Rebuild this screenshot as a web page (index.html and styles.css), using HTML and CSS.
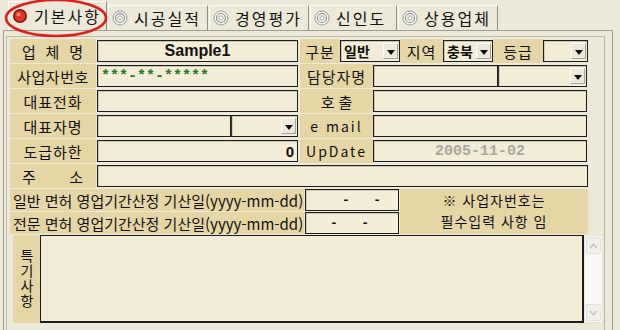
FILE: index.html
```html
<!DOCTYPE html>
<html lang="ko">
<head>
    <meta charset="UTF-8">
    <title>기본사항</title>
    <link rel="stylesheet" href="styles.css">
</head>
<body>
    <div class="window">
        <div class="tabs">
            <div class="tab active">
                <svg class="radio" viewBox="0 0 16 16" width="16" height="16">
                    <circle cx="8" cy="8" r="7" fill="#6e1a10"/>
                    <circle cx="8" cy="8" r="5.5" fill="#e0321e"/>
                    <circle cx="6.5" cy="6.5" r="2" fill="#ff8a70"/>
                </svg>
                기본사항
            </div>
            <div class="tab">
                <svg class="radio" viewBox="0 0 16 16" width="16" height="16">
                    <circle cx="8" cy="8" r="7" fill="#f4f4f0" stroke="#9a9a94" stroke-width="1"/>
                    <circle cx="8" cy="8" r="4.5" fill="none" stroke="#8f8f8a" stroke-width="1.2"/>
                    <circle cx="8" cy="8" r="2.2" fill="none" stroke="#b4b4ae" stroke-width="1"/>
                </svg>
                시공실적
            </div>
            <div class="tab">
                <svg class="radio" viewBox="0 0 16 16" width="16" height="16">
                    <circle cx="8" cy="8" r="7" fill="#f4f4f0" stroke="#9a9a94" stroke-width="1"/>
                    <circle cx="8" cy="8" r="4.5" fill="none" stroke="#8f8f8a" stroke-width="1.2"/>
                    <circle cx="8" cy="8" r="2.2" fill="none" stroke="#b4b4ae" stroke-width="1"/>
                </svg>
                경영평가
            </div>
            <div class="tab short">
                <svg class="radio" viewBox="0 0 16 16" width="16" height="16">
                    <circle cx="8" cy="8" r="7" fill="#f4f4f0" stroke="#9a9a94" stroke-width="1"/>
                    <circle cx="8" cy="8" r="4.5" fill="none" stroke="#8f8f8a" stroke-width="1.2"/>
                    <circle cx="8" cy="8" r="2.2" fill="none" stroke="#b4b4ae" stroke-width="1"/>
                </svg>
                신인도
            </div>
            <div class="tab">
                <svg class="radio" viewBox="0 0 16 16" width="16" height="16">
                    <circle cx="8" cy="8" r="7" fill="#f4f4f0" stroke="#9a9a94" stroke-width="1"/>
                    <circle cx="8" cy="8" r="4.5" fill="none" stroke="#8f8f8a" stroke-width="1.2"/>
                    <circle cx="8" cy="8" r="2.2" fill="none" stroke="#b4b4ae" stroke-width="1"/>
                </svg>
                상용업체
            </div>
        </div>

        <!-- red annotation ring around the active tab -->
        <svg class="mark" width="120" height="42" viewBox="0 0 120 42">
            <ellipse cx="56" cy="18" rx="50" ry="18" fill="none" stroke="#e31b1b" stroke-width="2.5"/>
        </svg>

        <div class="panel">
            <div class="frame">
                <div class="row">
                    <div class="label spread w86"><span>업</span><span>체</span><span>명</span></div>
                    <div class="field w201 sample">Sample1</div>
                    <div class="label w40 ml2">구분</div>
                    <div class="select w60"><span class="val">일반</span><span class="drop"></span></div>
                    <div class="label w43">지역</div>
                    <div class="select w50"><span class="val">충북</span><span class="drop"></span></div>
                    <div class="label w50">등급</div>
                    <div class="select w45"><span class="val"></span><span class="drop"></span></div>
                </div>
                <div class="row">
                    <div class="label w86 tight">사업자번호</div>
                    <div class="field w201 bizno">***-**-*****</div>
                    <div class="label w73 ml2">담당자명</div>
                    <div class="field w125"></div>
                    <div class="select w89 flat"><span class="val"></span><span class="drop"></span></div>
                </div>
                <div class="row">
                    <div class="label w86">대표전화</div>
                    <div class="field w201"></div>
                    <div class="label w73 ml2 wide">호출</div>
                    <div class="field w214"></div>
                </div>
                <div class="row">
                    <div class="label w86">대표자명</div>
                    <div class="field w134"></div>
                    <div class="select w67 flat"><span class="val"></span><span class="drop"></span></div>
                    <div class="label w73 ml2 latin">e mail</div>
                    <div class="field w214"></div>
                </div>
                <div class="row">
                    <div class="label w86">도급하한</div>
                    <div class="field w201 amount">0</div>
                    <div class="label w73 ml2 latin">UpDate</div>
                    <div class="field w214 date">2005-11-02</div>
                </div>
                <div class="row">
                    <div class="label spread w86"><span>주</span><span>소</span></div>
                    <div class="field w491"></div>
                </div>
                <div class="split">
                    <div class="split-left">
                        <div class="row short-row">
                            <div class="label w294 left">일반 면허 영업기간산정 기산일(yyyy-mm-dd)</div>
                            <div class="field w94 mask m1">-&nbsp;&nbsp;&nbsp;-</div>
                        </div>
                        <div class="row short-row">
                            <div class="label w294 left">전문 면허 영업기간산정 기산일(yyyy-mm-dd)</div>
                            <div class="field w94 mask m2">-&nbsp;&nbsp;&nbsp;-</div>
                        </div>
                    </div>
                    <div class="note">※ 사업자번호는<br>필수입력 사항 임</div>
                </div>
                <div class="memo-row">
                    <div class="vlabel"><span>특기사항</span></div>
                    <div class="memo"></div>
                    <div class="scroll">
                        <div class="sbtn">
                            <svg width="9" height="6" viewBox="0 0 9 6"><path d="M1 5 L4.5 1.5 L8 5" fill="none" stroke="#c4c4c0" stroke-width="1.6"/></svg>
                        </div>
                        <div class="sbtn">
                            <svg width="9" height="6" viewBox="0 0 9 6"><path d="M1 1 L4.5 4.5 L8 1" fill="none" stroke="#c4c4c0" stroke-width="1.6"/></svg>
                        </div>
                    </div>
                </div>
            </div>
        </div>
    </div>
</body>
</html>
```

FILE: styles.css
```css
* {
    margin: 0;
    padding: 0;
    box-sizing: border-box;
}

body {
    font-family: "Noto Sans CJK KR", "Liberation Sans", sans-serif;
    font-size: 15px;
    color: #111;
    background-color: #ece9d8;
    overflow: hidden;
}

.window {
    position: relative;
    width: 620px;
    height: 330px;
}

/* tab strip */

.tabs {
    display: flex;
    align-items: flex-end;
    height: 30px;
    padding-left: 8px;
}

.tab {
    display: flex;
    align-items: center;
    gap: 6px;
    width: 100px;
    height: 25px;
    padding-left: 3px;
    font-size: 16px;
    letter-spacing: 2px;
    color: #111;
    border-top: 1px solid #fbfbf8;
    border-left: 1px solid #fbfbf8;
    border-right: 1px solid #8f8d80;
    margin-right: 1px;
    white-space: nowrap;
}

.tab.short {
    width: 87px;
}

.tab.active {
    width: 99px;
    height: 29px;
}

.radio {
    flex: none;
}

.mark {
    position: absolute;
    left: 0;
    top: 0;
}

/* panel */

.panel {
    margin-left: 3px;
    width: 610px;
    height: 300px;
    border: 1px solid #9f9d90;
    border-bottom: none;
    padding: 5px 7px 0 2px;
}

.frame {
    border: 1px solid #b9b6a6;
    border-bottom: none;
    height: 295px;
    padding: 2px 1px 0 3px;
    display: flex;
    flex-direction: column;
    gap: 1px;
}

.row {
    display: flex;
    align-items: center;
    height: 24px;
}

.short-row {
    height: 22px;
}

.label {
    height: 100%;
    display: flex;
    align-items: center;
    justify-content: center;
    background-color: #e6d6a6;
    letter-spacing: 1px;
    white-space: nowrap;
    flex: none;
}

.label.tight {
    letter-spacing: 0.5px;
}

.label.wide {
    letter-spacing: 4px;
    padding-left: 4px;
}

.label.left {
    justify-content: flex-start;
    padding-left: 3px;
    letter-spacing: 0;
}

.label.spread {
    justify-content: space-between;
    padding: 0 12px;
}

.label.latin {
    letter-spacing: 2px;
    font-size: 14px;
}

.field {
    height: 22px;
    flex: none;
    background-color: #f3ecd6;
    border: 1px solid #1c1c1c;
    box-shadow: inset 1px 1px 0 #cfc7ad;
    display: flex;
    align-items: center;
    padding: 0 4px;
    white-space: nowrap;
}

.sample {
    justify-content: center;
    font-family: "Liberation Sans", sans-serif;
    font-weight: bold;
    font-size: 16px;
}

.bizno {
    font-family: "Liberation Mono", monospace;
    font-weight: bold;
    font-size: 15px;
    color: #1f7a1f;
    padding-left: 3px;
}

.amount {
    justify-content: flex-end;
    font-family: "Liberation Sans", sans-serif;
    font-weight: bold;
    font-size: 15px;
    padding-right: 3px;
}

.date {
    justify-content: center;
    font-family: "Liberation Mono", monospace;
    font-weight: bold;
    font-size: 15px;
    color: #a9a79f;
}

.mask {
    font-family: "Liberation Mono", monospace;
    font-weight: bold;
    font-size: 13px;
}

.m1 {
    padding-left: 36px;
}

.m2 {
    padding-left: 24px;
}

.select {
    height: 22px;
    flex: none;
    display: flex;
    align-items: stretch;
    background-color: #f3ecd6;
    border: 1px solid #1c1c1c;
    box-shadow: inset 1px 1px 0 #cfc7ad;
    padding: 2px 1px 2px 2px;
}

.select .val {
    flex: 1;
    display: flex;
    align-items: center;
    font-weight: bold;
    font-size: 14px;
    white-space: nowrap;
    padding-left: 1px;
}

.select .drop {
    width: 15px;
    flex: none;
    background-color: #ece9d8;
    border-left: 1px solid #fff;
    border-top: 1px solid #fff;
    border-right: 1px solid #a6a39a;
    border-bottom: 1px solid #a6a39a;
    position: relative;
}

.select .drop::after {
    content: "";
    position: absolute;
    left: 3px;
    top: 6px;
    border-left: 4px solid transparent;
    border-right: 4px solid transparent;
    border-top: 5px solid #111;
}

.select.flat {
    border-left-color: #3a3a3a;
}

.ml2 { margin-left: 2px; }
.w40 { width: 40px; }
.w43 { width: 43px; }
.w45 { width: 45px; }
.w50 { width: 50px; }
.w60 { width: 60px; }
.w67 { width: 67px; }
.w73 { width: 73px; }
.w86 { width: 86px; margin-right: 1px; }
.w89 { width: 89px; }
.w94 { width: 94px; }
.w125 { width: 125px; }
.w134 { width: 134px; }
.w201 { width: 201px; }
.w214 { width: 214px; }
.w294 { width: 294px; margin-right: 1px; }
.w491 { width: 491px; }

/* license rows + note */

.split {
    display: flex;
    width: 578px;
    gap: 1px;
}

.split-left {
    display: flex;
    flex-direction: column;
    gap: 1px;
}

.note {
    flex: 1;
    background-color: #e6d6a6;
    display: flex;
    align-items: flex-start;
    justify-content: center;
    text-align: center;
    font-size: 14px;
    line-height: 21px;
    padding-top: 1px;
    letter-spacing: 1px;
}

/* memo */

.memo-row {
    display: flex;
    height: 88px;
    margin-left: 3px;
}

.vlabel {
    width: 27px;
    flex: none;
    background-color: #e6d6a6;
    display: flex;
    align-items: center;
    justify-content: center;
}

.vlabel span {
    writing-mode: vertical-rl;
    text-orientation: upright;
    font-size: 14px;
    letter-spacing: 1px;
    line-height: 27px;
}

.memo {
    flex: 1;
    background-color: #f3ecd6;
    border: 1px solid #1c1c1c;
    border-right-width: 2px;
    border-bottom-width: 2px;
}

.scroll {
    width: 19px;
    flex: none;
    background-color: #f8f8f6;
    border: 1px solid #e6e4dc;
    display: flex;
    flex-direction: column;
    justify-content: space-between;
    padding: 1px;
}

.sbtn {
    height: 17px;
    background-color: #f0f0ec;
    border: 1px solid #e2e1da;
    border-radius: 2px;
    display: flex;
    align-items: center;
    justify-content: center;
}
```
